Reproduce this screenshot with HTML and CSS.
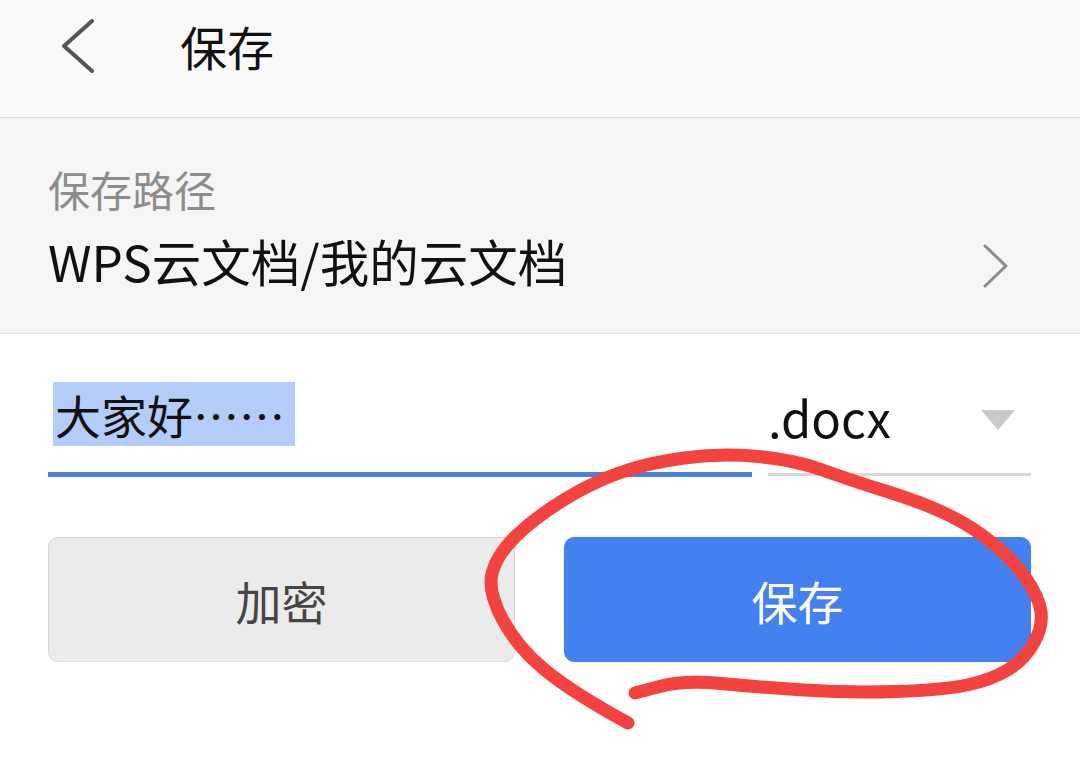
FILE: index.html
```html
<!DOCTYPE html>
<html lang="zh-CN">
<head>
    <meta charset="UTF-8">
    <meta name="viewport" content="width=device-width, initial-scale=1.0">
    <title>保存</title>
    <link rel="stylesheet" href="styles.css">
</head>
<body>
    <header class="topbar">
        <button class="back-button" aria-label="返回">
            <svg width="32" height="54" viewBox="0 0 32 54">
                <polyline points="30,2 2,27 30,52" fill="none" stroke="#555" stroke-width="4" stroke-linecap="round" stroke-linejoin="round"/>
            </svg>
        </button>
        <h1 class="title">保存</h1>
    </header>

    <section class="path-row">
        <div class="path-text">
            <p class="path-label">保存路径</p>
            <p class="path-value">WPS云文档/我的云文档</p>
        </div>
        <svg class="path-arrow" width="30" height="46" viewBox="0 0 30 46">
            <polyline points="5,3 26,23 5,43" fill="none" stroke="#8a8a8a" stroke-width="3" stroke-linecap="round" stroke-linejoin="round"/>
        </svg>
    </section>

    <section class="name-row">
        <div class="name-field">
            <span class="name-selected">大家好……</span>
        </div>
        <div class="type-field">
            <span class="type-text">.docx</span>
            <span class="type-caret"></span>
        </div>
    </section>

    <div class="actions">
        <button class="btn btn-plain">加密</button>
        <button class="btn btn-primary">保存</button>
    </div>

    <!-- hand-drawn mark over the save button -->
    <svg class="annotation" width="1080" height="776" viewBox="0 0 1080 776">
        <path d="M628 723 Q573 693 545 670 Q517 647 502 618.5 Q487 590 492.5 571.5 Q498 553 517 535 Q536 517 563.5 500 Q591 483 619 473 Q647 463 684 458 Q721 453 758 456.5 Q795 460 822.5 470 Q850 480 887 491.5 Q924 503 948.5 515 Q973 527 993 543.5 Q1013 560 1026 578.5 Q1039 597 1041 612 Q1043 627 1033.5 643.5 Q1024 660 1007.5 670 Q991 680 967 685 Q943 690 896.5 691.5 Q850 693 804 690 Q758 687 721 683.5 Q684 680 659.5 686.5 L635 693" fill="none" stroke="#f4423f" stroke-width="13" stroke-linecap="round" stroke-linejoin="round"/>
    </svg>
</body>
</html>
```

FILE: styles.css
```css
* {
    margin: 0;
    padding: 0;
    box-sizing: border-box;
    font-family: "Noto Sans CJK SC", "Noto Sans", sans-serif;
}

body {
    position: relative;
    width: 1080px;
    height: 776px;
    overflow: hidden;
    background-color: #ffffff;
    color: #111;
}

.topbar {
    display: flex;
    align-items: flex-start;
    height: 118px;
    padding-left: 62px;
    background-color: #f9f9f9;
    border-bottom: 1px solid #dedede;
}

.back-button {
    margin-top: 19px;
    width: 32px;
    height: 54px;
    border: none;
    background: none;
    display: flex;
}

.title {
    margin-top: 22px;
    margin-left: 86px;
    font-size: 47px;
    font-weight: normal;
    line-height: 1;
    color: #111;
}

.path-row {
    display: flex;
    align-items: flex-start;
    height: 216px;
    padding: 0 70px 0 48px;
    background-color: #f5f5f5;
    border-bottom: 1px solid #dedede;
}

.path-label {
    margin-top: 50px;
    font-size: 42px;
    line-height: 1;
    color: #8c8c8c;
}

.path-value {
    margin-top: 26px;
    font-size: 49.5px;
    line-height: 1;
    color: #111;
}

.path-arrow {
    margin-left: auto;
    margin-top: 125px;
}

.name-row {
    display: flex;
    align-items: flex-start;
    gap: 16px;
    padding: 0 49px 0 48px;
}

.name-field {
    width: 704px;
    height: 143px;
    padding-top: 48px;
    border-bottom: 5px solid #4a80e3;
}

.name-selected {
    display: inline-block;
    height: 64px;
    margin-left: 5px;
    padding: 0 10px 0 2px;
    font-size: 46px;
    line-height: 64px;
    background-color: #b3cdf8;
    color: #111;
}

.type-field {
    flex: 1;
    display: flex;
    align-items: flex-start;
    height: 142px;
    border-bottom: 3px solid #d8d8d8;
}

.type-text {
    margin-top: 58px;
    font-size: 49px;
    line-height: 1;
    color: #111;
}

.type-caret {
    margin-left: auto;
    margin-right: 16px;
    margin-top: 76px;
    width: 0;
    height: 0;
    border-left: 17px solid transparent;
    border-right: 17px solid transparent;
    border-top: 20px solid #c9c9c9;
}

.actions {
    display: flex;
    gap: 49px;
    margin-top: 60px;
    padding: 0 49px 0 48px;
}

.btn {
    flex: 1;
    height: 125px;
    border-radius: 10px;
    font-size: 46px;
    cursor: pointer;
}

.btn-plain {
    background-color: #ebebeb;
    border: 1px solid #d5d5d5;
    color: #454545;
}

.btn-primary {
    background-color: #4381f1;
    border: 1px solid #4381f1;
    color: #ffffff;
}

.annotation {
    position: absolute;
    top: 0;
    left: 0;
    pointer-events: none;
}
```
